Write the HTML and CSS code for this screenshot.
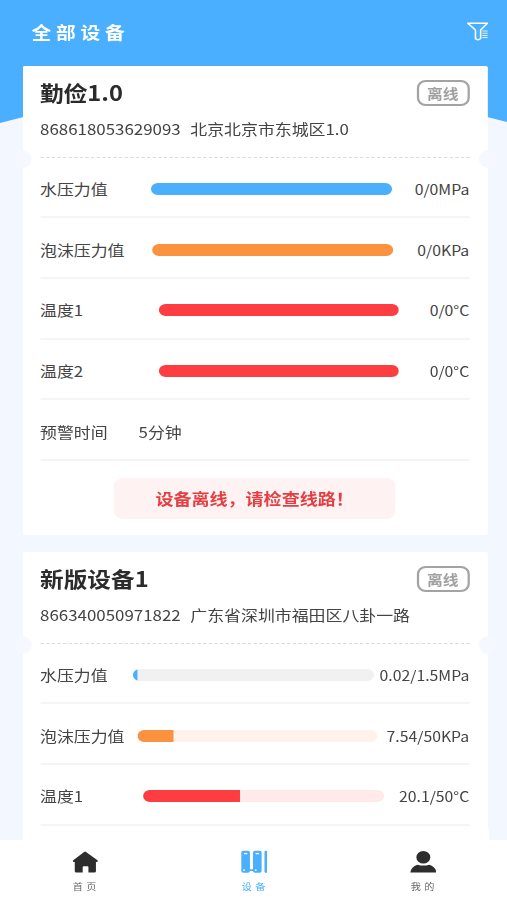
FILE: index.html
```
<!DOCTYPE html>
<html lang="zh-CN">
<head>
  <meta charset="UTF-8">
  <title>全部设备</title>
  <link rel="stylesheet" href="styles.css">
</head>
<body>
  <div class="app">
    <svg class="hero" viewBox="0 0 450 124" preserveAspectRatio="none">
      <path d="M0 0H450V122Q225 54 0 123Z" fill="#49affe"/>
    </svg>

    <header class="topbar">
      <h1 class="topbar-title">全部设备</h1>
      <svg class="filter" viewBox="0 0 20 20">
        <path d="M1.2 1.2H18.6L12.6 8V16.6Q10.5 18.8 8 16.6V8Z" fill="none" stroke="#fff" stroke-width="1.4" stroke-linejoin="round"/>
        <path d="M14.2 9H18.8M14.2 11.3H18.8M14.2 13.6H18.8M14.2 15.6H18.8" stroke="#fff" stroke-width="1" opacity=".85"/>
      </svg>
    </header>

    <main class="list">
      <section class="card">
        <div class="card-head">
          <div class="card-top">
            <h2 class="name">勤俭1.0</h2>
            <span class="badge">离线</span>
          </div>
          <div class="info"><span>868618053629093</span><span>北京北京市东城区1.0</span></div>
        </div>
        <div class="row">
          <span class="label">水压力值</span>
          <div class="bar blue"><div class="fill" style="width: 100%"></div></div>
          <span class="value">0/0MPa</span>
        </div>
        <div class="row">
          <span class="label">泡沫压力值</span>
          <div class="bar orange"><div class="fill" style="width: 100%"></div></div>
          <span class="value">0/0KPa</span>
        </div>
        <div class="row">
          <span class="label">温度1</span>
          <div class="bar red"><div class="fill" style="width: 100%"></div></div>
          <span class="value">0/0°C</span>
        </div>
        <div class="row">
          <span class="label">温度2</span>
          <div class="bar red"><div class="fill" style="width: 100%"></div></div>
          <span class="value">0/0°C</span>
        </div>
        <div class="row time">
          <span class="label">预警时间</span>
          <span class="minutes">5分钟</span>
        </div>
        <div class="notice">设备离线，请检查线路！</div>
      </section>

      <section class="card">
        <div class="card-head">
          <div class="card-top">
            <h2 class="name">新版设备1</h2>
            <span class="badge">离线</span>
          </div>
          <div class="info"><span>866340050971822</span><span>广东省深圳市福田区八卦一路</span></div>
        </div>
        <div class="row">
          <span class="label">水压力值</span>
          <div class="bar blue"><div class="fill" style="width: 1.5%"></div></div>
          <span class="value">0.02/1.5MPa</span>
        </div>
        <div class="row">
          <span class="label">泡沫压力值</span>
          <div class="bar orange"><div class="fill" style="width: 15.1%"></div></div>
          <span class="value">7.54/50KPa</span>
        </div>
        <div class="row">
          <span class="label">温度1</span>
          <div class="bar red"><div class="fill" style="width: 40.2%"></div></div>
          <span class="value">20.1/50°C</span>
        </div>
      </section>
    </main>

    <nav class="tabs">
      <a class="tab">
        <svg viewBox="0 0 24 24">
          <path d="M12 1.2 23 10.2Q23.8 11.4 22.6 12H21.6V21.4Q21.6 22.8 20.2 22.8H14.8V17.4Q14.8 16.4 13.8 16.4H10.6Q9.6 16.4 9.6 17.4V22.8H3.8Q2.4 22.8 2.4 21.4V12H1.4Q.2 11.4 1 10.2L10.9 1.8Q12 .8 13.1 1.8Z" fill="#2d2d2d"/>
        </svg>
        <span>首页</span>
      </a>
      <a class="tab active">
        <svg viewBox="0 0 24 24">
          <rect x=".2" y=".6" width="7.8" height="22.4" rx="1.8" fill="#49affe"/>
          <rect x="10.8" y=".6" width="7.8" height="22.4" rx="1.8" fill="#49affe"/>
          <rect x="21.2" y=".6" width="2.8" height="22.4" rx="1.2" fill="#49affe"/>
          <path d="M8 20.3H11" stroke="#49affe" stroke-width="1.8"/>
          <path d="M2.6 3.8Q4.1 2.6 5.6 3.8M13.2 3.8Q14.7 2.6 16.2 3.8" fill="none" stroke="#fff" stroke-width="1.2"/>
          <circle cx="2.7" cy="20.2" r=".9" fill="#fff"/>
          <circle cx="13.3" cy="20.2" r=".9" fill="#fff"/>
        </svg>
        <span>设备</span>
      </a>
      <a class="tab">
        <svg viewBox="0 0 24 24">
          <ellipse cx="12" cy="7.2" rx="6.3" ry="6.4" fill="#2d2d2d"/>
          <path d="M.2 22.8Q.6 17.2 6.6 14.8Q12 16.6 17.4 14.8Q23.4 17.2 23.8 22.8Z" fill="#2d2d2d"/>
        </svg>
        <span>我的</span>
      </a>
    </nav>
  </div>
</body>
</html>
```
FILE: styles.css
```
* {
  box-sizing: border-box;
}

body {
  margin: 0;
  overflow: hidden;
  background: #f3f7ff;
  font-family: 'Noto Sans CJK SC', sans-serif;
  color: #444;
}

.app {
  position: relative;
  display: flex;
  flex-direction: column;
  width: 450px;
  height: 900px;
  transform: scaleX(1.12667);
  transform-origin: 0 0;
}

.hero {
  position: absolute;
  top: 0;
  left: 0;
  width: 450px;
  height: 124px;
}

.topbar {
  position: relative;
  flex: none;
  height: 65.5px;
  padding: 0 16px 1px 28px;
  display: flex;
  align-items: center;
  justify-content: space-between;
}

.topbar-title {
  margin: 0;
  font-size: 17.5px;
  font-weight: 700;
  line-height: 24px;
  letter-spacing: 4.2px;
  color: #fff;
}

.filter {
  width: 20px;
  height: 20px;
}

.list {
  position: relative;
  flex: 1;
  min-height: 0;
  overflow: hidden;
  padding: 0 17px 0 19.5px;
}

.card {
  height: 469.5px;
  margin-bottom: 16.5px;
  padding: 0 16.5px 0 16px;
  background: #fff;
  border-radius: 2px;
}

.card-head {
  position: relative;
  height: 92px;
  padding-top: 13px;
  border-bottom: 1px dashed #dcdcdc;
}

/* ticket notches */
.card-head::before,
.card-head::after {
  content: '';
  position: absolute;
  bottom: -11px;
  width: 16px;
  height: 18px;
  border-radius: 50%;
  background: #f5f8ff;
}

.card-head::before {
  left: -24px;
}

.card-head::after {
  right: -24.5px;
}

.card-top {
  display: flex;
  align-items: center;
  justify-content: space-between;
  height: 29px;
}

.name {
  margin: -2px 0 0;
  font-size: 21px;
  line-height: 29px;
  font-weight: 700;
  color: #2b2b2b;
}

.badge {
  width: 47px;
  height: 26px;
  border: 2px solid #a3a3a3;
  border-radius: 8px;
  font-size: 14px;
  font-weight: 700;
  line-height: 23px;
  text-align: center;
  color: #a0a0a0;
}

.info {
  display: flex;
  gap: 8.5px;
  margin-top: 10px;
  font-size: 15px;
  line-height: 22px;
}

.row {
  display: flex;
  align-items: center;
  justify-content: space-between;
  height: 60.7px;
  padding-top: 4px;
  border-bottom: 2px solid #f5f5f6;
  font-size: 15px;
  line-height: 22px;
}

.label {
  width: 78px;
  white-space: nowrap;
}

.value {
  font-size: 14px;
}

.bar {
  width: 213.5px;
  height: 12px;
  border-radius: 6px;
  overflow: hidden;
}

.fill {
  height: 100%;
}

.blue {
  background: #f1f1f1;
}

.blue .fill {
  background: #49affe;
}

.orange {
  background: #fff2eb;
}

.orange .fill {
  background: #fb923f;
}

.red {
  background: #ffe9e9;
}

.red .fill {
  background: #fd3d42;
}

.time {
  justify-content: flex-start;
}

.minutes {
  margin-left: 9.5px;
}

.notice {
  width: 250px;
  height: 41px;
  margin: 17px auto 0;
  border-radius: 8px;
  background: #fff2f2;
  font-size: 16px;
  font-weight: 700;
  line-height: 41px;
  text-align: center;
  white-space: nowrap;
  color: #e33f43;
}

.tabs {
  position: relative;
  flex: none;
  display: flex;
  height: 60px;
  background: #fff;
}

.tab {
  flex: 1;
  display: flex;
  flex-direction: column;
  align-items: center;
  padding: 10px 0 0 1px;
  font-size: 9px;
  line-height: 14px;
  color: #666;
}

.tab svg {
  width: 23.5px;
  height: 24px;
}

.tab span {
  margin-top: 6px;
  padding-left: 2px;
  letter-spacing: 3px;
}

.tab.active {
  color: #49affe;
}
```
